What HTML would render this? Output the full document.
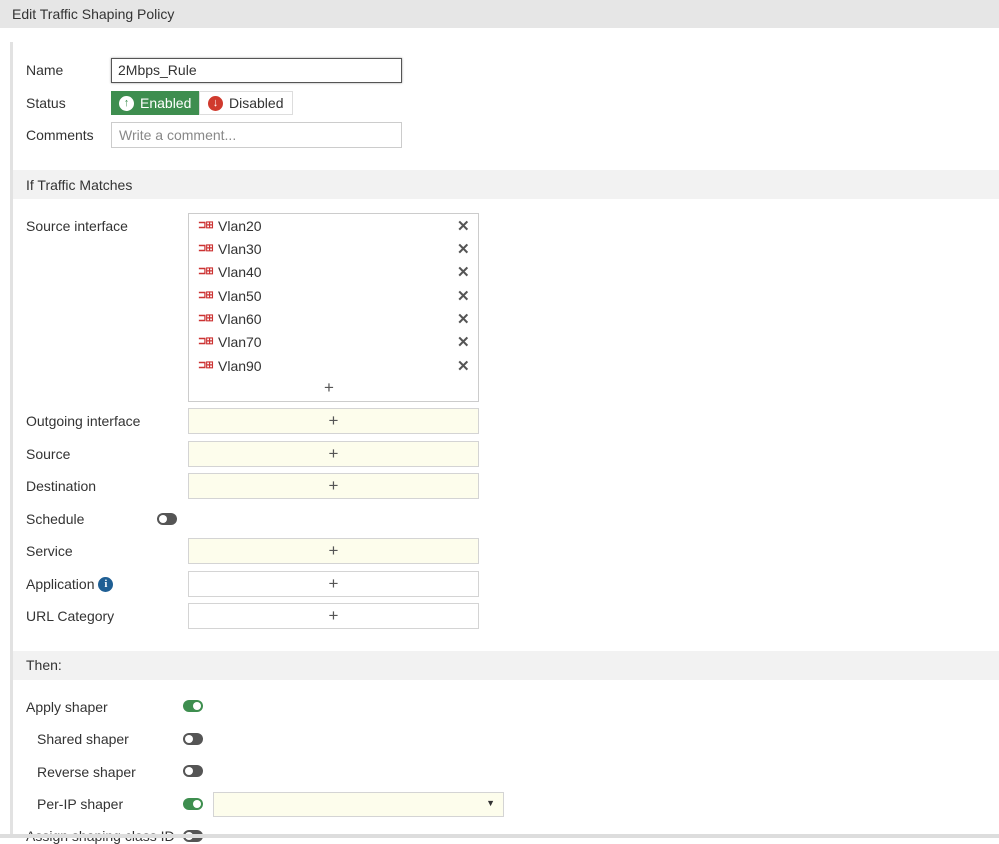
<!DOCTYPE html>
<html><head><style>
*{margin:0;padding:0;box-sizing:border-box}
body{width:999px;height:838px;overflow:hidden;background:#fff;font-family:"Liberation Sans",sans-serif;font-size:14px;color:#333;position:relative}
.a{position:absolute}
.lbl{position:absolute;left:26px;line-height:16px}
.box{position:absolute;left:188px;width:291px;height:26px;border:1px solid #d4d4d4;background:#fdfdec;text-align:center;line-height:23px;font-size:17px;color:#555}
.w{background:#fff}
.tg{position:absolute;width:20px;height:12px;border-radius:6px;background:#555}
.tg:after{content:"";position:absolute;left:2px;top:2px;width:8px;height:8px;border-radius:50%;background:#fff}
.tg.on{background:#3e8e4f}.tg.on:after{left:10px}
.it{position:absolute;left:198px;line-height:16px;display:flex;align-items:center}
.it b{display:inline-block;width:14px;color:#c33;font-size:10px;font-weight:bold;margin-right:6px;letter-spacing:-1px}
.x{position:absolute;left:457px;font-weight:bold;color:#555;font-size:15px}
.st{position:absolute;top:91px;height:24px;display:flex;align-items:center}
.ic{display:inline-flex;align-items:center;justify-content:center;width:15px;height:15px;border-radius:50%;font-size:11px;font-weight:bold;margin-right:6px}
</style></head><body>
<div class="a" style="left:0;top:0;width:999px;height:28px;background:#e6e6e6"></div>
<div class="a" style="left:12px;top:6px;line-height:16px">Edit Traffic Shaping Policy</div>
<div class="a" style="left:10px;top:42px;width:3px;height:796px;background:#e2e2e2"></div>

<div class="lbl" style="top:62px">Name</div>
<div class="a" style="left:111px;top:58px;width:291px;height:25px;border:1px solid #555;box-shadow:0 0 2px #999;padding-left:6px;line-height:22px">2Mbps_Rule</div>
<div class="lbl" style="top:95px">Status</div>
<div class="st" style="left:111px;width:89px;background:#3e8e4f;color:#fff;padding-left:8px"><span class="ic" style="background:#fff;color:#3e8e4f">↑</span>Enabled</div>
<div class="st" style="left:199px;width:94px;border:1px solid #ddd;padding-left:8px"><span class="ic" style="background:#d03a2e;color:#fff">↓</span>Disabled</div>
<div class="lbl" style="top:127px">Comments</div>
<div class="a" style="left:111px;top:122px;width:291px;height:26px;border:1px solid #ccc;color:#888;padding-left:7px;line-height:24px">Write a comment...</div>

<div class="a" style="left:13px;top:170px;width:986px;height:29px;background:#f2f2f2"></div>
<div class="lbl" style="top:177px">If Traffic Matches</div>

<div class="lbl" style="top:218px">Source interface</div>
<div class="a" style="left:188px;top:213px;width:291px;height:189px;border:1px solid #ccc"></div>
<div class="it" style="top:218px"><b>⊐⊞</b>Vlan20</div><div class="x" style="top:217px">✕</div>
<div class="it" style="top:241px"><b>⊐⊞</b>Vlan30</div><div class="x" style="top:240px">✕</div>
<div class="it" style="top:264px"><b>⊐⊞</b>Vlan40</div><div class="x" style="top:263px">✕</div>
<div class="it" style="top:288px"><b>⊐⊞</b>Vlan50</div><div class="x" style="top:287px">✕</div>
<div class="it" style="top:311px"><b>⊐⊞</b>Vlan60</div><div class="x" style="top:310px">✕</div>
<div class="it" style="top:334px"><b>⊐⊞</b>Vlan70</div><div class="x" style="top:333px">✕</div>
<div class="it" style="top:358px"><b>⊐⊞</b>Vlan90</div><div class="x" style="top:357px">✕</div>
<div class="a" style="left:324px;top:378px;font-size:17px;color:#555">+</div>

<div class="lbl" style="top:413px">Outgoing interface</div><div class="box" style="top:408px">+</div>
<div class="lbl" style="top:446px">Source</div><div class="box" style="top:441px">+</div>
<div class="lbl" style="top:478px">Destination</div><div class="box" style="top:473px">+</div>
<div class="lbl" style="top:511px">Schedule</div><div class="tg" style="left:157px;top:513px"></div>
<div class="lbl" style="top:576px;display:flex;align-items:center">Application&nbsp;<span style="display:inline-flex;align-items:center;justify-content:center;width:15px;height:15px;border-radius:50%;background:#1f5f94;color:#fff;font-size:11px;font-weight:bold;font-family:'Liberation Serif',serif">i</span></div>
<div class="lbl" style="top:543px">Service</div><div class="box" style="top:538px">+</div>
<div class="box w" style="top:571px">+</div>
<div class="lbl" style="top:608px">URL Category</div><div class="box w" style="top:603px">+</div>

<div class="a" style="left:13px;top:651px;width:986px;height:29px;background:#f2f2f2"></div>
<div class="lbl" style="top:657px">Then:</div>

<div class="lbl" style="top:699px">Apply shaper</div><div class="tg on" style="left:183px;top:700px"></div>
<div class="lbl" style="top:731px;left:37px">Shared shaper</div><div class="tg" style="left:183px;top:733px"></div>
<div class="lbl" style="top:764px;left:37px">Reverse shaper</div><div class="tg" style="left:183px;top:765px"></div>
<div class="lbl" style="top:796px;left:37px">Per-IP shaper</div><div class="tg on" style="left:183px;top:798px"></div>
<div class="a" style="left:213px;top:792px;width:291px;height:25px;border:1px solid #d4d4d4;background:#fdfdec"><span style="position:absolute;right:8px;top:5px;font-size:9px">▼</span></div>
<div class="lbl" style="top:828px">Assign shaping class ID</div><div class="tg" style="left:183px;top:830px"></div>
<div class="a" style="left:0;top:834px;width:999px;height:4px;background:#ddd"></div>
</body></html>
